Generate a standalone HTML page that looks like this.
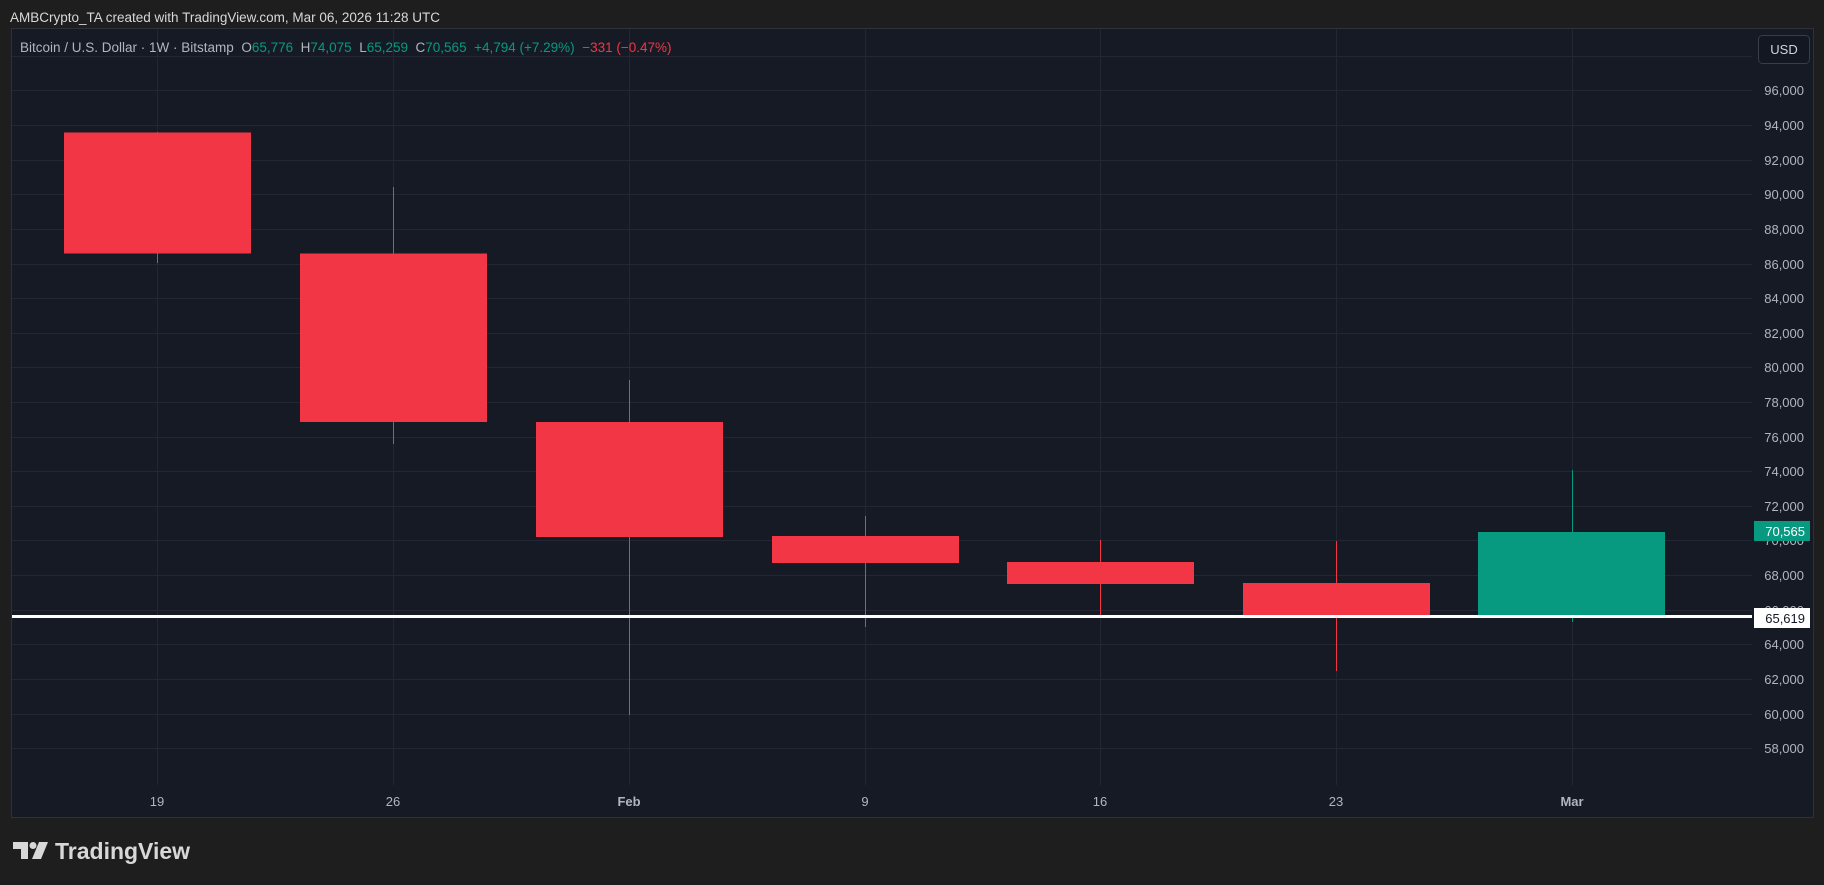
<!DOCTYPE html>
<html><head><meta charset="utf-8"><style>
html,body{margin:0;padding:0;background:#1e1e1e;width:1824px;height:885px;overflow:hidden}
svg{display:block}
text{font-family:"Liberation Sans",sans-serif}
</style></head><body>
<svg width="1824" height="885" viewBox="0 0 1824 885" xmlns="http://www.w3.org/2000/svg">
<rect width="1824" height="885" fill="#1e1e1e"/>
<text x="10" y="22" font-size="13.5" fill="#d8d8d8">AMBCrypto_TA created with TradingView.com, Mar 06, 2026 11:28 UTC</text>
<rect x="11.5" y="28.5" width="1802" height="789" fill="#161a25" stroke="#2f3139"/>
<g stroke="#242733" stroke-width="1">
<line x1="12" x2="1752" y1="56.5" y2="56.5"/>
<line x1="12" x2="1752" y1="90.5" y2="90.5"/>
<line x1="12" x2="1752" y1="125.5" y2="125.5"/>
<line x1="12" x2="1752" y1="160.5" y2="160.5"/>
<line x1="12" x2="1752" y1="194.5" y2="194.5"/>
<line x1="12" x2="1752" y1="229.5" y2="229.5"/>
<line x1="12" x2="1752" y1="264.5" y2="264.5"/>
<line x1="12" x2="1752" y1="298.5" y2="298.5"/>
<line x1="12" x2="1752" y1="333.5" y2="333.5"/>
<line x1="12" x2="1752" y1="367.5" y2="367.5"/>
<line x1="12" x2="1752" y1="402.5" y2="402.5"/>
<line x1="12" x2="1752" y1="437.5" y2="437.5"/>
<line x1="12" x2="1752" y1="471.5" y2="471.5"/>
<line x1="12" x2="1752" y1="506.5" y2="506.5"/>
<line x1="12" x2="1752" y1="540.5" y2="540.5"/>
<line x1="12" x2="1752" y1="575.5" y2="575.5"/>
<line x1="12" x2="1752" y1="610.5" y2="610.5"/>
<line x1="12" x2="1752" y1="644.5" y2="644.5"/>
<line x1="12" x2="1752" y1="679.5" y2="679.5"/>
<line x1="12" x2="1752" y1="714.5" y2="714.5"/>
<line x1="12" x2="1752" y1="748.5" y2="748.5"/>
<line x1="157.5" x2="157.5" y1="29" y2="785"/>
<line x1="393.5" x2="393.5" y1="29" y2="785"/>
<line x1="629.5" x2="629.5" y1="29" y2="785"/>
<line x1="865.5" x2="865.5" y1="29" y2="785"/>
<line x1="1100.5" x2="1100.5" y1="29" y2="785"/>
<line x1="1336.5" x2="1336.5" y1="29" y2="785"/>
<line x1="1572.5" x2="1572.5" y1="29" y2="785"/>
</g>
<g fill="#f23645" stroke="#f23645">
<line x1="157.5" x2="157.5" y1="132" y2="263"/>
<line x1="393.5" x2="393.5" y1="187" y2="444"/>
<line x1="629.5" x2="629.5" y1="380" y2="715"/>
<line x1="865.5" x2="865.5" y1="516" y2="627"/>
<line x1="1100.5" x2="1100.5" y1="540" y2="616"/>
<line x1="1336.5" x2="1336.5" y1="541" y2="671"/>
</g>
<g fill="#f23645">
<rect x="64" y="132.5" width="187" height="121"/>
<rect x="300" y="253.5" width="187" height="168.5"/>
<rect x="536" y="422" width="187" height="115"/>
<rect x="772" y="536" width="187" height="27"/>
<rect x="1007" y="562" width="187" height="22"/>
<rect x="1243" y="583" width="187" height="33"/>
</g>
<line x1="1572.5" x2="1572.5" y1="470" y2="622" stroke="#089981"/>
<rect x="1478" y="532" width="187" height="84" fill="#089981"/>
<rect x="12" y="615" width="1740" height="3" fill="#ffffff"/>
<g font-size="13" fill="#b2b5be" text-anchor="end">
<text x="1804" y="95">96,000</text>
<text x="1804" y="130">94,000</text>
<text x="1804" y="165">92,000</text>
<text x="1804" y="199">90,000</text>
<text x="1804" y="234">88,000</text>
<text x="1804" y="269">86,000</text>
<text x="1804" y="303">84,000</text>
<text x="1804" y="338">82,000</text>
<text x="1804" y="372">80,000</text>
<text x="1804" y="407">78,000</text>
<text x="1804" y="442">76,000</text>
<text x="1804" y="476">74,000</text>
<text x="1804" y="511">72,000</text>
<text x="1804" y="545">70,000</text>
<text x="1804" y="580">68,000</text>
<text x="1804" y="615">66,000</text>
<text x="1804" y="649">64,000</text>
<text x="1804" y="684">62,000</text>
<text x="1804" y="719">60,000</text>
<text x="1804" y="753">58,000</text>
</g>
<rect x="1754" y="521" width="56" height="20" fill="#089981"/>
<text x="1805" y="536" font-size="13" fill="#ffffff" text-anchor="end">70,565</text>
<rect x="1754" y="608" width="56" height="20" fill="#ffffff"/>
<text x="1805" y="623" font-size="13" fill="#131722" text-anchor="end">65,619</text>
<rect x="1758.5" y="35.5" width="51" height="28" rx="4" fill="#131722" stroke="#3a3d47"/>
<text x="1784" y="54" font-size="13" fill="#d1d4dc" text-anchor="middle">USD</text>
<text x="20" y="52" font-size="13.5" fill="#b2b5be" xml:space="preserve">Bitcoin / U.S. Dollar · 1W · Bitstamp  <tspan>O</tspan><tspan fill="#089981">65,776</tspan>  <tspan>H</tspan><tspan fill="#089981">74,075</tspan>  <tspan>L</tspan><tspan fill="#089981">65,259</tspan>  <tspan>C</tspan><tspan fill="#089981">70,565</tspan>  <tspan fill="#089981">+4,794 (+7.29%)</tspan>  <tspan fill="#f23645">−331 (−0.47%)</tspan></text>
<g font-size="13" fill="#b2b5be" text-anchor="middle">
<text x="157" y="806">19</text>
<text x="393" y="806">26</text>
<text x="629" y="806" font-weight="bold">Feb</text>
<text x="865" y="806">9</text>
<text x="1100" y="806">16</text>
<text x="1336" y="806">23</text>
<text x="1572" y="806" font-weight="bold">Mar</text>
</g>
<g fill="#d8d8d8">
<path d="M13 842h15v17h-7v-10h-8z"/>
<circle cx="33" cy="845.5" r="3.5"/>
<path d="M39 842h9l-7 17h-9z"/>
</g>
<text x="55" y="859" font-size="23" font-weight="bold" fill="#d8d8d8">TradingView</text>
</svg>
</body></html>
